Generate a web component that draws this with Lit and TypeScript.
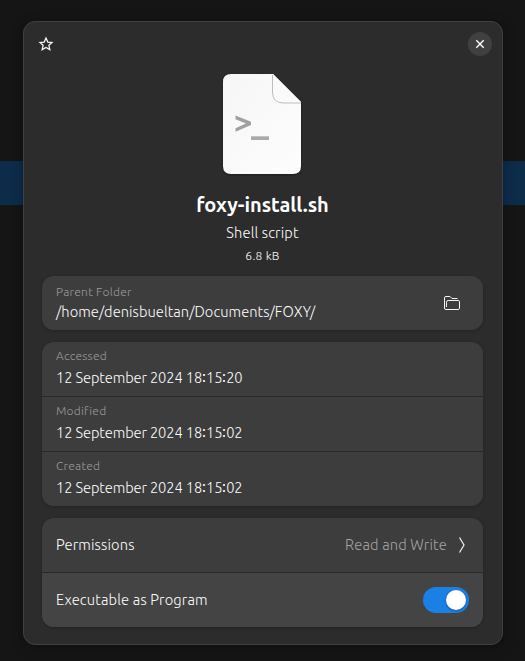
import { LitElement, html, css } from "lit";
import { customElement, property } from "lit/decorators.js";

@customElement("file-icon")
class FileIcon extends LitElement {
  static styles = css`
    :host { display: block; width: 84px; height: 106px; }
    svg { display: block; filter: drop-shadow(0 1px 1px rgba(0, 0, 0, 0.4)); }
  `;
  render() {
    return html`<svg width="84" height="106" viewBox="0 0 84 106">
      <defs>
        <linearGradient id="sheet" x1="0" y1="0" x2="1" y2="1">
          <stop offset="0" stop-color="#f6f6f6" />
          <stop offset="1" stop-color="#fdfdfd" />
        </linearGradient>
      </defs>
      <path d="M11 2H53L81 30V94Q81 102 73 102H11Q3 102 3 94V10Q3 2 11 2Z" fill="url(#sheet)" />
      <path d="M52.5 2.5V20Q52.5 31 63.5 31H81L81 30L53 2Z" fill="#fafafa" />
      <path d="M52.5 3V20Q52.5 31 63.5 31H81" fill="none" stroke="#bdbdbd" stroke-width="1" />
      <path d="M15.5 43.5L31 49.7V53L15.5 59.8V56.2L26 51.4L15.5 47.2Z" fill="#a0a0a0" />
      <rect x="31" y="64.3" width="18" height="3.7" fill="#aaaaaa" />
    </svg>`;
  }
}

@customElement("info-row")
class InfoRow extends LitElement {
  @property() label = "";
  @property() value = "";
  static styles = css`
    :host { display: flex; align-items: center; height: 54px; box-sizing: border-box; padding: 0 14px; }
    .text { flex: 1; display: flex; flex-direction: column; padding-bottom: 3px; }
    .label { font-size: 12px; line-height: 18px; color: #9c9c9c; letter-spacing: 0.25px; }
    .value { font-size: 14.667px; line-height: 22px; margin-top: 2px; color: #fff; letter-spacing: -0.11px; }
    :host([compact]) .text { padding-bottom: 1px; }
    :host([compact]) .value { margin-top: 0; letter-spacing: 0.06px; }
  `;
  render() {
    return html`<div class="text">
        <span class="label">${this.label}</span>
        <span class="value">${this.value}</span>
      </div>
      <slot></slot>`;
  }
}

@customElement("app-root")
class AppRoot extends LitElement {
  static styles = css`
    :host {
      display: grid;
      width: 525px;
      height: 661px;
      box-sizing: border-box;
      padding: 21px 22px 16px 23px;
      overflow: hidden;
      background: linear-gradient(#151515 161px, #0d2c4a 161px, #0d2c4a 205px, #151515 205px);
      font-family: Ubuntu, "Noto Sans", sans-serif;
      font-weight: 300;
      color: #fff;
    }
    .dialog {
      box-sizing: border-box;
      border: 1px solid #404040;
      border-radius: 12px;
      background: #2c2c2c;
      padding: 0 19px 0 18px;
      box-shadow: 0 2px 12px rgba(0, 0, 0, 0.35);
    }
    .header {
      display: flex;
      justify-content: space-between;
      align-items: center;
      height: 44px;
      margin: 0 -9px 0 -4px;
    }
    .header svg { display: block; }
    .close {
      width: 24px; height: 24px; border-radius: 50%;
      background: #404040; display: grid; place-items: center;
    }
    .summary { display: flex; flex-direction: column; align-items: center; height: 210px; }
    file-icon { margin: 6px 1px 0 0; }
    .name { font-size: 20px; line-height: 28px; font-weight: 700; margin-top: 13px; white-space: nowrap; }
    .type { font-size: 14.667px; line-height: 22px; margin-top: 3px; letter-spacing: 0.15px; }
    .size { font-size: 12px; line-height: 18px; margin-top: 3px; letter-spacing: 0.3px; }
    .card {
      border-radius: 12px;
      background: #3d3d3d;
      box-shadow: 0 1px 3px rgba(0, 0, 0, 0.22);
      margin-bottom: 12px;
      overflow: hidden;
    }
    .divided { border-top: 1px solid #292929; }
    .row {
      display: flex; align-items: center; height: 54px; line-height: 18px;
      box-sizing: content-box; padding: 0 14px; font-size: 14.667px; letter-spacing: 0.16px;
    }
    .row span { padding-bottom: 1px; }
    .row .title { flex: 1; }
    .muted { color: #a4a4a4; }
    .chevron { margin: 0 3px 0 11px; }
    .active { background: #444444; }
    .folder { margin-right: 8px; }
    .switch {
      width: 46px; height: 26px; border-radius: 13px; background: #1b80e5;
      box-sizing: border-box; padding: 3px; display: flex; justify-content: flex-end;
    }
    .knob { width: 20px; height: 20px; border-radius: 50%; background: #fff; box-shadow: 0 1px 3px rgba(0, 0, 0, 0.3); }
  `;

  render() {
    return html`<div class="dialog">
      <div class="header">
        <svg width="16" height="16" viewBox="0 0 16 16">
          <path d="M8 2L9.8 6.1L14 6.5L10.9 9.3L11.8 13.6L8 11.4L4.2 13.6L5.1 9.3L2 6.5L6.2 6.1Z" fill="none" stroke="#f4f4f4" stroke-width="1.3" />
        </svg>
        <div class="close">
          <svg width="16" height="16" viewBox="0 0 16 16">
            <path d="M4.3 4.3L11.7 11.7M11.7 4.3L4.3 11.7" stroke="#fff" stroke-width="1.4" />
          </svg>
        </div>
      </div>
      <div class="summary">
        <file-icon></file-icon>
        <div class="name">foxy-install.sh</div>
        <div class="type">Shell script</div>
        <div class="size">6.8 kB</div>
      </div>
      <div class="card">
        <info-row compact label="Parent Folder" value="/home/denisbueltan/Documents/FOXY/">
          <svg class="folder" width="18" height="16" viewBox="0 0 18 16">
            <path d="M3.5 14.5H2.9Q1.5 14.5 1.5 13V2.9Q1.5 1.5 2.9 1.5H7L9 3.5H14.5" fill="none" stroke="#f6f6f6" />
            <path d="M3.5 12V7.2Q3.5 5.5 5.2 5.5H15.2Q16.5 5.5 16.5 6.8V13.1Q16.5 14.5 15.1 14.5H3" fill="none" stroke="#f6f6f6" />
          </svg>
        </info-row>
      </div>
      <div class="card">
        <info-row label="Accessed" value="12 September 2024 18∶15∶20"></info-row>
        <div class="divided"><info-row label="Modified" value="12 September 2024 18∶15∶02"></info-row></div>
        <div class="divided"><info-row label="Created" value="12 September 2024 18∶15∶02"></info-row></div>
      </div>
      <div class="card">
        <div class="row">
          <span class="title">Permissions</span>
          <span class="muted">Read and Write</span>
          <svg class="chevron" width="8" height="18" viewBox="0 0 8 18">
            <path d="M1.5 1.5L6 9L1.5 16.5" fill="none" stroke="#f2f2f2" stroke-width="1.2" />
          </svg>
        </div>
        <div class="row divided active">
          <span class="title">Executable as Program</span>
          <div class="switch"><div class="knob"></div></div>
        </div>
      </div>
    </div>`;
  }
}
